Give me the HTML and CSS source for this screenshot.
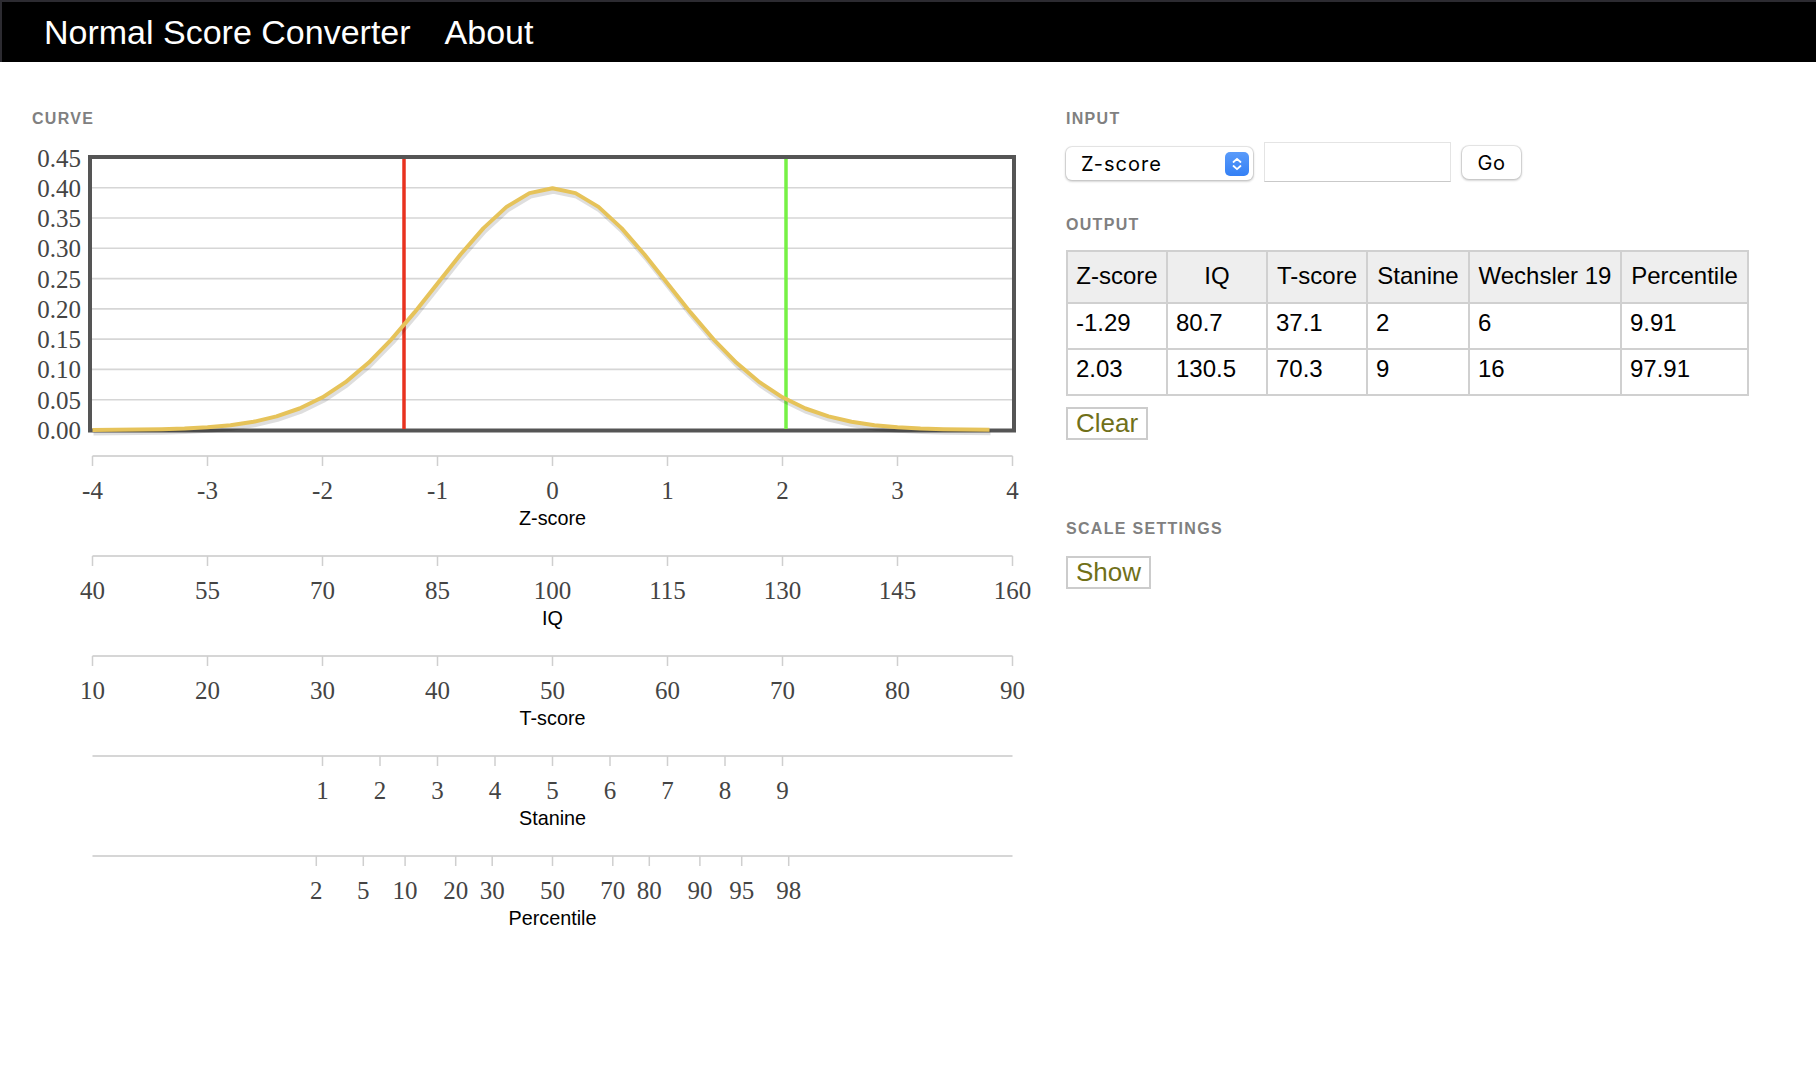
FILE: index.html
```html
<!DOCTYPE html>
<html lang="en">
<head>
<meta charset="utf-8">
<title>Normal Score Converter</title>
<link rel="stylesheet" href="styles.css">
</head>
<body>
<header class="topbar">
  <a class="brand" href="#">Normal Score Converter</a>
  <a class="navlink" href="#">About</a>
</header>

<main class="main">
  <section class="curve-col">
    <h2 class="section-title">CURVE</h2>
    <svg class="chart" width="1000" height="800" viewBox="32 140 1000 800" xmlns="http://www.w3.org/2000/svg">
      <g class="grid">
        <line x1="92" y1="187.7" x2="1012" y2="187.7"/>
        <line x1="92" y1="218" x2="1012" y2="218"/>
        <line x1="92" y1="248.3" x2="1012" y2="248.3"/>
        <line x1="92" y1="278.6" x2="1012" y2="278.6"/>
        <line x1="92" y1="308.9" x2="1012" y2="308.9"/>
        <line x1="92" y1="339.1" x2="1012" y2="339.1"/>
        <line x1="92" y1="369.4" x2="1012" y2="369.4"/>
        <line x1="92" y1="399.7" x2="1012" y2="399.7"/>
      </g>
      <g class="ylabels">
        <text x="81" y="166.5">0.45</text>
        <text x="81" y="196.7">0.40</text>
        <text x="81" y="227">0.35</text>
        <text x="81" y="257.3">0.30</text>
        <text x="81" y="287.6">0.25</text>
        <text x="81" y="317.9">0.20</text>
        <text x="81" y="348.1">0.15</text>
        <text x="81" y="378.4">0.10</text>
        <text x="81" y="408.7">0.05</text>
        <text x="81" y="439">0.00</text>
      </g>
      <rect class="frame" x="90" y="157" width="924" height="273.5"/>
      <line class="mark-red" x1="404" y1="159" x2="404" y2="429"/>
      <line class="mark-green" x1="786" y1="159" x2="786" y2="429"/>
      <polyline class="curve-shadow" points="92.5,429.9 115.5,429.8 138.5,429.6 161.5,429.3 184.5,428.6 207.5,427.3 230.5,425.2 253.5,421.8 276.5,416.4 299.5,408.5 322.5,397.3 345.5,382.2 368.5,362.8 391.5,339.3 414.5,312.4 437.5,283.4 460.5,254.5 483.5,228.1 506.5,206.9 529.5,193.1 552.5,188.3 575.5,193.1 598.5,206.9 621.5,228.1 644.5,254.5 667.5,283.4 690.5,312.4 713.5,339.3 736.5,362.8 759.5,382.2 782.5,397.3 805.5,408.5 828.5,416.4 851.5,421.8 874.5,425.2 897.5,427.3 920.5,428.6 943.5,429.3 966.5,429.6 989.5,429.8"/>
      <polyline class="curve" points="92.5,429.9 115.5,429.8 138.5,429.6 161.5,429.3 184.5,428.6 207.5,427.3 230.5,425.2 253.5,421.8 276.5,416.4 299.5,408.5 322.5,397.3 345.5,382.2 368.5,362.8 391.5,339.3 414.5,312.4 437.5,283.4 460.5,254.5 483.5,228.1 506.5,206.9 529.5,193.1 552.5,188.3 575.5,193.1 598.5,206.9 621.5,228.1 644.5,254.5 667.5,283.4 690.5,312.4 713.5,339.3 736.5,362.8 759.5,382.2 782.5,397.3 805.5,408.5 828.5,416.4 851.5,421.8 874.5,425.2 897.5,427.3 920.5,428.6 943.5,429.3 966.5,429.6 989.5,429.8"/>

      <!-- Z-score axis -->
      <g class="axis">
        <line class="axis-line" x1="92.5" y1="456" x2="1012.5" y2="456"/>
        <path class="ticks" d="M92.5 456v10M207.5 456v10M322.5 456v10M437.5 456v10M552.5 456v10M667.5 456v10M782.5 456v10M897.5 456v10M1012.5 456v10"/>
        <g class="tick-labels">
          <text x="92.5" y="498.5">-4</text><text x="207.5" y="498.5">-3</text><text x="322.5" y="498.5">-2</text>
          <text x="437.5" y="498.5">-1</text><text x="552.5" y="498.5">0</text><text x="667.5" y="498.5">1</text>
          <text x="782.5" y="498.5">2</text><text x="897.5" y="498.5">3</text><text x="1012.5" y="498.5">4</text>
        </g>
        <text class="axis-title" x="552.5" y="524.5">Z-score</text>
      </g>

      <!-- IQ axis -->
      <g class="axis">
        <line class="axis-line" x1="92.5" y1="556" x2="1012.5" y2="556"/>
        <path class="ticks" d="M92.5 556v10M207.5 556v10M322.5 556v10M437.5 556v10M552.5 556v10M667.5 556v10M782.5 556v10M897.5 556v10M1012.5 556v10"/>
        <g class="tick-labels">
          <text x="92.5" y="598.5">40</text><text x="207.5" y="598.5">55</text><text x="322.5" y="598.5">70</text>
          <text x="437.5" y="598.5">85</text><text x="552.5" y="598.5">100</text><text x="667.5" y="598.5">115</text>
          <text x="782.5" y="598.5">130</text><text x="897.5" y="598.5">145</text><text x="1012.5" y="598.5">160</text>
        </g>
        <text class="axis-title" x="552.5" y="624.5">IQ</text>
      </g>

      <!-- T-score axis -->
      <g class="axis">
        <line class="axis-line" x1="92.5" y1="656" x2="1012.5" y2="656"/>
        <path class="ticks" d="M92.5 656v10M207.5 656v10M322.5 656v10M437.5 656v10M552.5 656v10M667.5 656v10M782.5 656v10M897.5 656v10M1012.5 656v10"/>
        <g class="tick-labels">
          <text x="92.5" y="698.5">10</text><text x="207.5" y="698.5">20</text><text x="322.5" y="698.5">30</text>
          <text x="437.5" y="698.5">40</text><text x="552.5" y="698.5">50</text><text x="667.5" y="698.5">60</text>
          <text x="782.5" y="698.5">70</text><text x="897.5" y="698.5">80</text><text x="1012.5" y="698.5">90</text>
        </g>
        <text class="axis-title" x="552.5" y="724.5">T-score</text>
      </g>

      <!-- Stanine axis -->
      <g class="axis">
        <line class="axis-line" x1="92.5" y1="756" x2="1012.5" y2="756"/>
        <path class="ticks" d="M322.5 756v10M380 756v10M437.5 756v10M495 756v10M552.5 756v10M610 756v10M667.5 756v10M725 756v10M782.5 756v10"/>
        <g class="tick-labels">
          <text x="322.5" y="798.5">1</text><text x="380" y="798.5">2</text><text x="437.5" y="798.5">3</text>
          <text x="495" y="798.5">4</text><text x="552.5" y="798.5">5</text><text x="610" y="798.5">6</text>
          <text x="667.5" y="798.5">7</text><text x="725" y="798.5">8</text><text x="782.5" y="798.5">9</text>
        </g>
        <text class="axis-title" x="552.5" y="824.5">Stanine</text>
      </g>

      <!-- Percentile axis -->
      <g class="axis">
        <line class="axis-line" x1="92.5" y1="856" x2="1012.5" y2="856"/>
        <path class="ticks" d="M316.3 856v10M363.3 856v10M405.1 856v10M455.7 856v10M492.2 856v10M552.5 856v10M612.8 856v10M649.3 856v10M699.9 856v10M741.7 856v10M788.7 856v10"/>
        <g class="tick-labels">
          <text x="316.3" y="898.5">2</text><text x="363.3" y="898.5">5</text><text x="405.1" y="898.5">10</text>
          <text x="455.7" y="898.5">20</text><text x="492.2" y="898.5">30</text><text x="552.5" y="898.5">50</text>
          <text x="612.8" y="898.5">70</text><text x="649.3" y="898.5">80</text><text x="699.9" y="898.5">90</text>
          <text x="741.7" y="898.5">95</text><text x="788.7" y="898.5">98</text>
        </g>
        <text class="axis-title" x="552.5" y="924.5">Percentile</text>
      </g>
    </svg>
  </section>

  <section class="side-col">
    <h2 class="section-title">INPUT</h2>
    <div class="input-row">
      <div class="select-wrap">
        <select class="score-select">
          <option>Z-score</option>
          <option>IQ</option>
          <option>T-score</option>
          <option>Stanine</option>
          <option>Wechsler 19</option>
          <option>Percentile</option>
        </select>
        <span class="stepper">
          <svg width="24" height="24" viewBox="0 0 24 24" xmlns="http://www.w3.org/2000/svg">
            <path d="M8.5 10 L12 6.8 L15.5 10" fill="none" stroke="#fff" stroke-width="1.8" stroke-linecap="round" stroke-linejoin="round"/>
            <path d="M8.5 14 L12 17.2 L15.5 14" fill="none" stroke="#fff" stroke-width="1.8" stroke-linecap="round" stroke-linejoin="round"/>
          </svg>
        </span>
      </div>
      <input class="score-input" type="text">
      <button class="go-btn" type="button">Go</button>
    </div>

    <h2 class="section-title output-title">OUTPUT</h2>
    <table class="results">
      <thead>
        <tr>
          <th class="c-z">Z-score</th>
          <th class="c-iq">IQ</th>
          <th class="c-t">T-score</th>
          <th class="c-st">Stanine</th>
          <th class="c-w">Wechsler 19</th>
          <th class="c-p">Percentile</th>
        </tr>
      </thead>
      <tbody>
        <tr><td>-1.29</td><td>80.7</td><td>37.1</td><td>2</td><td>6</td><td>9.91</td></tr>
        <tr><td>2.03</td><td>130.5</td><td>70.3</td><td>9</td><td>16</td><td>97.91</td></tr>
      </tbody>
    </table>
    <button class="plain-btn clear-btn" type="button">Clear</button>

    <h2 class="section-title scale-title">SCALE SETTINGS</h2>
    <button class="plain-btn" type="button">Show</button>
  </section>
</main>
</body>
</html>
```

FILE: styles.css
```css
* {
  box-sizing: border-box;
}

html, body {
  margin: 0;
  padding: 0;
  background: #fff;
}

body {
  font-family: "Liberation Sans", Arial, Helvetica, sans-serif;
  color: #000;
}

.topbar {
  height: 62px;
  background: #000;
  border-top: 2px solid #2c2b31;
  border-left: 2px solid #2c2b31;
  display: flex;
  align-items: center;
  padding-left: 42px;
}

.brand,
.navlink {
  color: #fff;
  text-decoration: none;
  font-size: 34px;
  line-height: 60px;
}

.navlink {
  margin-left: 34px;
}

.main {
  display: grid;
  grid-template-columns: 1034px 1fr;
  padding: 48px 0 0 32px;
}

.section-title {
  margin: 0;
  font-size: 16px;
  line-height: 18px;
  font-weight: bold;
  letter-spacing: 1.3px;
  color: #808080;
}

.chart {
  display: block;
  margin-top: 12px;
}

.grid line {
  stroke: #d6d6d6;
  stroke-width: 1.6;
}

.ylabels text {
  font-family: "Liberation Serif", "Times New Roman", serif;
  font-size: 25px;
  fill: #444;
  text-anchor: end;
}

.frame {
  fill: none;
  stroke: #555;
  stroke-width: 4;
}

.mark-red {
  stroke: #e8321f;
  stroke-width: 3.5;
}

.mark-green {
  stroke: #76f145;
  stroke-width: 3.5;
}

.curve {
  fill: none;
  stroke: #e6c35a;
  stroke-width: 4;
  stroke-linejoin: round;
}

.curve-shadow {
  fill: none;
  stroke: rgba(0, 0, 0, 0.13);
  stroke-width: 5;
  stroke-linejoin: round;
  transform: translate(1px, 3px);
}

.axis-line {
  stroke: #d6d6d6;
  stroke-width: 2;
}

.ticks {
  stroke: #cfcfcf;
  stroke-width: 1.5;
  fill: none;
}

.tick-labels text {
  font-family: "Liberation Serif", "Times New Roman", serif;
  font-size: 25px;
  fill: #444;
  text-anchor: middle;
}

.axis-title {
  font-family: "Liberation Sans", Arial, sans-serif;
  font-size: 19.8px;
  fill: #000;
  text-anchor: middle;
}

/* right column */
.side-col {
  display: flex;
  flex-direction: column;
  align-items: flex-start;
}

.input-row {
  display: flex;
  align-items: center;
  gap: 11px;
  margin-top: 14px;
  height: 40px;
}

.select-wrap {
  position: relative;
  width: 187px;
  height: 33px;
  margin-top: 3px;
}

.score-select {
  appearance: none;
  -webkit-appearance: none;
  width: 100%;
  height: 100%;
  border: none;
  border-radius: 6px;
  background: #fff;
  box-shadow: 0 0 0 1px rgba(0, 0, 0, 0.07), 0 1px 2px 1px rgba(0, 0, 0, 0.16);
  font-family: Inter, "Liberation Sans", sans-serif;
  font-size: 20px;
  letter-spacing: 1px;
  color: #000;
  padding: 0 0 0 15px;
}

.stepper {
  position: absolute;
  right: 4px;
  top: 4.5px;
  width: 24px;
  height: 24px;
  border-radius: 5px;
  background: linear-gradient(#5a9bfa, #3480f5);
  display: block;
}

.stepper svg {
  display: block;
}

.score-input {
  width: 187px;
  height: 40px;
  border: 1px solid #e4e4e4;
  border-bottom: 1px solid #c9c9c9;
  background: #fff;
  padding: 0 8px;
  font-size: 20px;
}

.go-btn {
  width: 59px;
  height: 33px;
  border: none;
  border-radius: 7px;
  background: #fff;
  box-shadow: 0 0 0 1px rgba(0, 0, 0, 0.07), 0 1px 2px 1px rgba(0, 0, 0, 0.16);
  font-family: Inter, "Liberation Sans", sans-serif;
  font-size: 20px;
  letter-spacing: 0.5px;
  color: #000;
  padding: 2px 0 0;
}

.output-title {
  margin-top: 34px;
}

.results {
  margin-top: 16px;
  border-collapse: collapse;
  table-layout: fixed;
  width: 681px;
  font-size: 24px;
  line-height: 28px;
}

.results th,
.results td {
  border: 2px solid #d0d0d0;
  padding: 5px 8px 11px;
  text-align: left;
  font-weight: normal;
  white-space: nowrap;
  color: #000;
}

.results th {
  background: #eeeeee;
  padding: 10px 8px 12px;
  text-align: center;
}

.c-z { width: 100px; }
.c-iq { width: 100px; }
.c-t { width: 100px; }
.c-st { width: 102px; }
.c-w { width: 152px; }
.c-p { width: 127px; }

.plain-btn {
  height: 33px;
  border: 2px solid #cccccc;
  background: #fff;
  padding: 0 8px;
  font-family: "Liberation Sans", Arial, sans-serif;
  font-size: 26px;
  line-height: 29px;
  color: #707019;
  border-radius: 0;
}

.clear-btn {
  margin-top: 11px;
}

.scale-title {
  margin-top: 80px;
  margin-bottom: 18px;
}
```
